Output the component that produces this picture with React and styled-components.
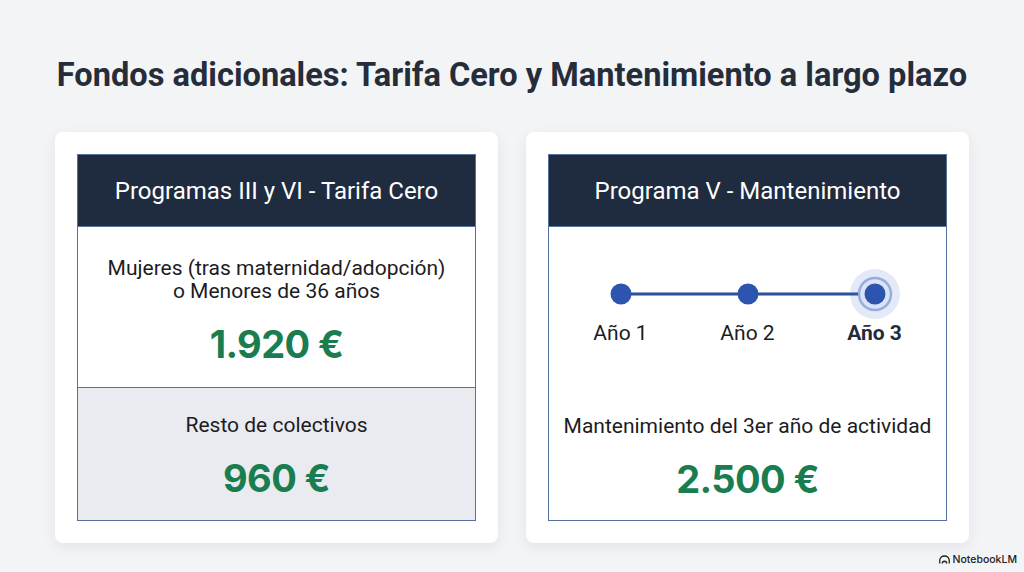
import styled, { createGlobalStyle } from "styled-components";

const GlobalStyle = createGlobalStyle`
  html, body {
    margin: 0;
    padding: 0;
    background: #f3f4f6;
  }
  #root {
    min-height: 572px;
  }
`;

const Page = styled.div`
  position: relative;
  width: 1024px;
  height: 572px;
  box-sizing: border-box;
  padding-top: 52px;
  background: #f3f4f6;
  font-family: Roboto, "Liberation Sans", sans-serif;
  color: #1c1c1e;
`;

const Title = styled.h1`
  margin: 0 0 34px;
  height: 46px;
  line-height: 46px;
  text-align: center;
  font-size: 32.6px;
  font-weight: 700;
  color: #262d3a;
`;

const Cards = styled.div`
  display: flex;
  justify-content: center;
  gap: 28px;
`;

const Card = styled.div`
  width: 443px;
  height: 411px;
  box-sizing: border-box;
  padding: 22px;
  background: #fff;
  border-radius: 8px;
  box-shadow: 0 4px 14px rgba(30, 40, 60, 0.08);
`;

const Box = styled.div`
  height: 100%;
  box-sizing: border-box;
  display: flex;
  flex-direction: column;
  border: 1.5px solid #56729c;
`;

const Header = styled.div`
  height: 71px;
  flex: none;
  display: flex;
  align-items: center;
  justify-content: center;
  background: #1f2b3e;
  color: #fff;
  font-size: 24px;
  border-bottom: 1.5px solid #56729c;
`;

const Section = styled.div`
  flex: ${(p) => (p.$fill ? "1" : "none")};
  height: ${(p) => (p.$h ? `${p.$h}px` : "auto")};
  display: flex;
  flex-direction: column;
  align-items: center;
  box-sizing: border-box;
  padding-top: ${(p) => p.$pt || 0}px;
  background: ${(p) => (p.$muted ? "#e9ebf0" : "#fff")};
  border-top: ${(p) => (p.$divider ? "1.5px solid #56729c" : "none")};
`;

const Label = styled.div`
  font-size: 21px;
  line-height: 23px;
  text-align: center;
`;

const Amount = styled.div`
  margin-top: 18px;
  font-family: Inter, "Liberation Sans", Arial, sans-serif;
  font-size: 38px;
  font-weight: 700;
  letter-spacing: -0.6px;
  line-height: 46px;
  color: #1a7d4f;
`;

const Timeline = styled.div`
  display: flex;
  flex-direction: column;
  align-items: center;
`;

const Years = styled.div`
  display: grid;
  grid-template-columns: repeat(3, 127px);
`;

const Year = styled.div`
  text-align: center;
  font-size: 21px;
  line-height: 24px;
  font-weight: ${(p) => (p.$active ? 700 : 400)};
  color: ${(p) => (p.$active ? "#232b39" : "#1c1c1e")};
`;

const Watermark = styled.div`
  position: absolute;
  right: 7px;
  bottom: 6px;
  display: flex;
  align-items: center;
  gap: 3px;
  font-family: Inter, "Liberation Sans", sans-serif;
  font-size: 10.5px;
  font-weight: 500;
  color: #222;
`;

function TimelineDots() {
  const xs = [38, 165, 292];
  return (
    <svg width="330" height="54" viewBox="0 0 330 54">
      <line x1={xs[0]} y1="27" x2={xs[2]} y2="27" stroke="#2c4f9e" strokeWidth="3" />
      <circle cx={xs[2]} cy="27" r="25" fill="#3b63c4" opacity="0.14" />
      <circle cx={xs[2]} cy="27" r="17" fill="#dbe4f7" />
      <circle cx={xs[2]} cy="27" r="16" fill="none" stroke="#5b80d0" strokeOpacity="0.55" strokeWidth="2.5" />
      {xs.map((x) => (
        <circle key={x} cx={x} cy="27" r="10.5" fill="#2d55b0" />
      ))}
    </svg>
  );
}

function NotebookIcon() {
  return (
    <svg width="11" height="9" viewBox="0 0 22 18">
      <path
        d="M1.5 17 V11 A9.5 9 0 0 1 20.5 11 V17 M6.5 17 A4.5 4.5 0 0 1 15.5 17 M1.5 11 A9.5 9 0 0 1 20.5 11"
        fill="none"
        stroke="#222"
        strokeWidth="2.6"
      />
    </svg>
  );
}

export default function App() {
  return (
    <Page>
      <GlobalStyle />
      <Title>Fondos adicionales: Tarifa Cero y Mantenimiento a largo plazo</Title>
      <Cards>
        <Card>
          <Box>
            <Header>Programas III y VI - Tarifa Cero</Header>
            <Section $h={160} $pt={30}>
              <Label>
                Mujeres (tras maternidad/adopción)
                <br />o Menores de 36 años
              </Label>
              <Amount>1.920 €</Amount>
            </Section>
            <Section $fill $muted $divider $pt={26}>
              <Label>Resto de colectivos</Label>
              <Amount>960 €</Amount>
            </Section>
          </Box>
        </Card>
        <Card>
          <Box>
            <Header>Programa V - Mantenimiento</Header>
            <Section $h={160} $pt={40}>
              <Timeline>
                <TimelineDots />
                <Years>
                  <Year>Año 1</Year>
                  <Year>Año 2</Year>
                  <Year $active>Año 3</Year>
                </Years>
              </Timeline>
            </Section>
            <Section $fill $pt={27.5}>
              <Label>Mantenimiento del 3er año de actividad</Label>
              <Amount>2.500 €</Amount>
            </Section>
          </Box>
        </Card>
      </Cards>
      <Watermark>
        <NotebookIcon />
        NotebookLM
      </Watermark>
    </Page>
  );
}
